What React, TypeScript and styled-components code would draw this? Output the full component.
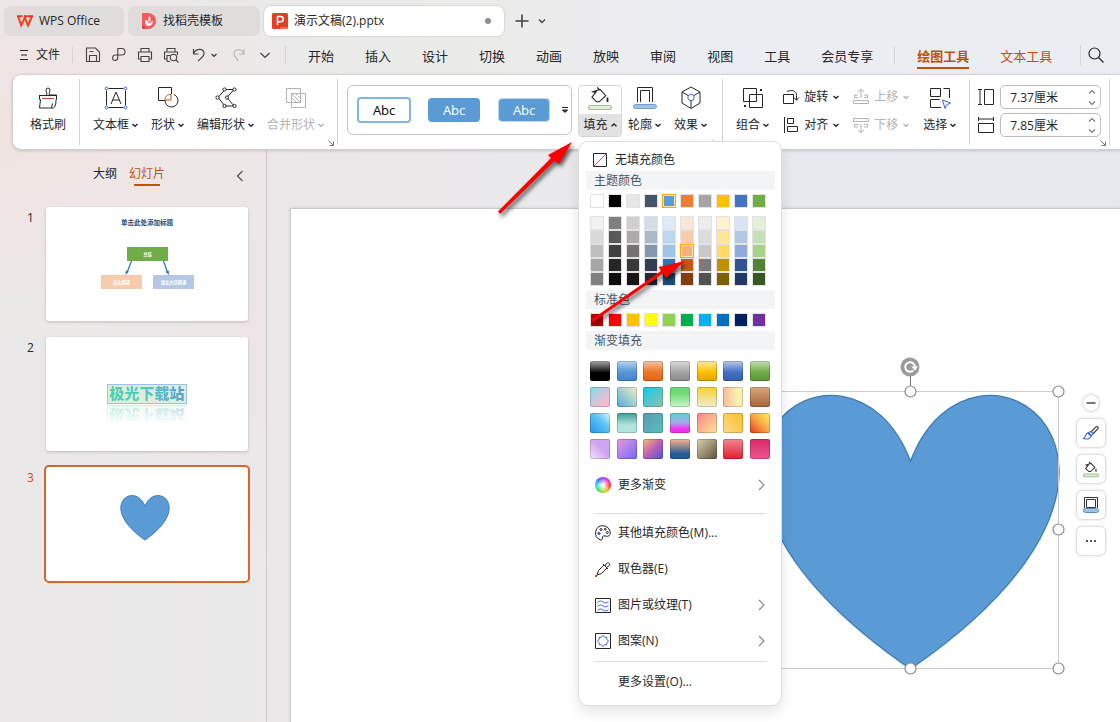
import React from 'react';
import styled, { createGlobalStyle, css } from 'styled-components';

const ink = '#262626';
const accent = '#c0510f';
const muted = '#b3b3b3';
const rule = '#d4d4d6';
const blue = '#5b9bd5';

const GlobalStyle = createGlobalStyle`
  *, *::before, *::after { box-sizing: border-box; }
  body {
    margin: 0;
    color: ${ink};
    font-family: "Open Sans", "Noto Sans CJK SC", sans-serif;
    font-size: 12px;
    line-height: 16px;
  }
  button, input {
    font: inherit;
    color: inherit;
    border: 0;
    background: none;
    padding: 0;
    margin: 0;
  }
`;

/* ---------- shared parts ---------- */

const Icon = styled.svg<{ $size?: number; $weight?: number }>`
  display: block;
  flex: none;
  width: ${(p) => p.$size ?? 16}px;
  height: ${(p) => p.$size ?? 16}px;
  fill: none;
  stroke: currentColor;
  stroke-width: ${(p) => p.$weight ?? 1};
  overflow: visible;
`;

const Caret = ({ up }: { up?: boolean }) => (
  <Icon $size={6} $weight={1.4} viewBox="0 0 6 6">
    <path d={up ? 'M.5 4.2 3 1.9l2.5 2.3' : 'M.5 1.9 3 4.2l2.5-2.3'} />
  </Icon>
);

const Divider = styled.span<{ $h: number }>`
  flex: none;
  width: 1px;
  height: ${(p) => p.$h}px;
  background: ${rule};
`;

const Window = styled.div`
  position: relative;
  min-height: 100vh;
  display: flex;
  flex-direction: column;
  overflow: hidden;
  background:
    radial-gradient(ellipse 280px 220px at 20px 130px, rgba(242, 226, 224, 0.8), rgba(242, 226, 224, 0)),
    radial-gradient(ellipse 200px 240px at 280px 330px, rgba(237, 227, 229, 0.9), rgba(237, 227, 229, 0)),
    linear-gradient(90deg, #eae8e8 0%, #ebebea 45%, #ecedf2 62%, #ecedf2 100%);
`;

/* ---------- title bar ---------- */

const TitleBar = styled.header`
  display: flex;
  align-items: center;
  gap: 4px;
  padding: 6px 4px 0;
`;

const DocTab = styled.button<{ $width: number; $active?: boolean; $pad: number }>`
  display: flex;
  align-items: center;
  gap: 6px;
  width: ${(p) => p.$width}px;
  height: 30px;
  padding: 0 ${(p) => p.$pad}px;
  border-radius: 7px;
  background: ${(p) => (p.$active ? '#fff' : '#dfdcdb')};
  box-shadow: ${(p) => (p.$active ? '0 0 2px rgba(0,0,0,.25)' : 'none')};
  text-align: left;
  white-space: nowrap;
`;

const UnsavedDot = styled.span`
  width: 6px;
  height: 6px;
  margin-left: auto;
  margin-right: 5px;
  border-radius: 50%;
  background: #8e8e8e;
`;

const PlainButton = styled.button`
  display: flex;
  align-items: center;
  justify-content: center;
`;

const NewTab = styled.div`
  display: flex;
  align-items: center;
  gap: 9px;
  margin-left: 7px;
  color: #444;
`;

/* ---------- menu bar ---------- */

const MenuBar = styled.nav`
  display: flex;
  align-items: center;
  height: 38px;
  padding: 0 16px 0 19px;
  white-space: nowrap;
`;

const FileMenu = styled.button`
  display: flex;
  align-items: center;
  gap: 7px;
  margin-right: 12px;
`;

const QuickAccess = styled.div`
  display: flex;
  align-items: center;
  gap: 10px;
  padding: 0 12px;
  color: #444;
`;

const UndoGroup = styled.div`
  display: flex;
  align-items: center;
  gap: 4px;
  padding: 0 4px 0 2px;
`;

const Faded = styled(PlainButton)`
  color: ${muted};
`;

const MenuTabs = styled.div`
  display: flex;
  align-items: center;
  gap: 31px;
  padding: 0 21px 0 22px;
  font-size: 13px;
`;

const MenuTab = styled.button<{ $tone?: 'active' | 'context' }>`
  height: 28px;
  line-height: 20px;
  border-bottom: 2px solid transparent;
  padding-top: 4px;
  ${(p) => p.$tone && css`color: ${accent};`}
  ${(p) =>
    p.$tone === 'active' &&
    css`
      font-weight: 700;
      border-bottom-color: ${accent};
    `}
`;

const Spring = styled.span`
  flex: 1;
`;

/* ---------- ribbon ---------- */

const Ribbon = styled.section`
  position: relative;
  z-index: 2;
  display: flex;
  align-items: flex-start;
  height: 76px;
  margin-left: 12px;
  padding-top: 4px;
  border: 1px solid #d2d0d0;
  border-right: 0;
  border-radius: 9px 0 0 9px;
  background: #fff;
  box-shadow: 0 1px 3px rgba(0, 0, 0, 0.16);
  white-space: nowrap;
`;

const Group = styled.div<{ $gap?: number; $l?: number; $r?: number }>`
  position: relative;
  display: flex;
  flex: none;
  align-items: flex-start;
  gap: ${(p) => p.$gap ?? 13}px;
  height: 66px;
  padding: 7px ${(p) => p.$r ?? 13}px 0 ${(p) => p.$l ?? 13}px;
  border-right: 1px solid ${rule};
`;

const BigButton = styled.button<{ $off?: boolean }>`
  display: flex;
  flex-direction: column;
  align-items: center;
  gap: 7px;
  color: ${(p) => (p.$off ? muted : ink)};
`;

const Caption = styled.span`
  display: flex;
  align-items: center;
  gap: 3px;
`;

const Launcher = styled.button`
  position: absolute;
  right: 3px;
  bottom: -1px;
  color: #777;
`;

const Gallery = styled.div`
  display: flex;
  align-items: center;
  width: 225px;
  height: 50px;
  margin: 6px 6px 0 9px;
  padding: 0 1px 0 9px;
  border: 1px solid #c4c4c4;
  border-radius: 6px;
`;

const StyleSample = styled.button<{ $kind: 'outline' | 'solid' | 'edged' }>`
  width: 52px;
  height: 24px;
  margin-right: 18px;
  border-radius: 4px;
  font-size: 13px;
  background: ${(p) => (p.$kind === 'outline' ? '#fff' : blue)};
  color: ${(p) => (p.$kind === 'outline' ? '#000' : '#fff')};
  ${(p) =>
    p.$kind === 'outline' &&
    css`
      width: 54px;
      height: 26px;
      margin-right: 17px;
      border: 2px solid #84b4e2;
    `}
  ${(p) =>
    p.$kind === 'edged' &&
    css`
      border: 1px solid #bcd6ef;
      margin-right: 11px;
    `}
`;

const FillControl = styled.div`
  position: relative;
  width: 44px;
  margin-top: 6px;
`;

const FillButton = styled.button`
  display: flex;
  flex-direction: column;
  align-items: center;
  width: 44px;
  height: 52px;
  overflow: hidden;
  border: 1px solid #d8d8d8;
  border-radius: 4px;
`;

const FillLabel = styled.span`
  display: flex;
  align-items: center;
  justify-content: center;
  gap: 3px;
  flex: 1;
  width: 100%;
  margin-top: 4px;
  background: #e2e2e2;
`;

const Stack = styled.div`
  display: flex;
  flex-direction: column;
  gap: 12px;
  padding-top: 3px;
`;

const SmallButton = styled.button<{ $off?: boolean }>`
  display: flex;
  align-items: center;
  gap: 5px;
  height: 16px;
  color: ${(p) => (p.$off ? muted : ink)};
`;

const SizeFields = styled.div`
  display: flex;
  flex-direction: column;
  gap: 4px;
  margin-top: -1px;
`;

const SizeLabel = styled.label`
  display: flex;
  align-items: center;
  gap: 6px;
`;

const SizeBox = styled.span`
  display: flex;
  align-items: center;
  width: 101px;
  height: 24px;
  padding: 0 5px 0 9px;
  border: 1px solid #bdbdbd;
  border-radius: 5px;
`;

const SizeInput = styled.input`
  flex: 1;
  min-width: 0;
  height: 20px;
  outline: 0;
`;

const Spinner = styled.span`
  display: flex;
  flex-direction: column;
  gap: 5px;
  color: #777;
`;

/* ---------- fill dropdown ---------- */

const Popup = styled.div`
  position: absolute;
  z-index: 5;
  top: 56px;
  left: 0;
  width: 204px;
  padding: 7px 6px 5px 7px;
  border: 1px solid #dedede;
  border-radius: 10px;
  background: #fff;
  box-shadow: 0 6px 14px rgba(0, 0, 0, 0.1);
`;

const NoFill = styled.button`
  display: flex;
  align-items: center;
  gap: 8px;
  height: 22px;
  padding-left: 7px;
`;

const Heading = styled.h3`
  height: 19px;
  margin: 0;
  padding-left: 8px;
  font-size: 12px;
  font-weight: 400;
  line-height: 20px;
  color: #44546a;
  background: #f3f4f6;
`;

const SwatchRow = styled.div`
  display: flex;
  gap: 4px;
  margin: 4px;
`;

const TintGrid = styled.div`
  display: flex;
  gap: 4px;
  margin: 8px 4px 4px;
`;

const TintColumn = styled.div`
  display: flex;
  flex-direction: column;
`;

const Swatch = styled.button<{ $c: string; $on?: boolean }>`
  width: 14px;
  height: 14px;
  border: 1px solid ${(p) => (p.$on ? '#ffa800' : '#e2e2e6')};
  background: ${(p) => p.$c};
  ${(p) => p.$on && css`box-shadow: inset 0 0 0 1px #ffe3a6;`}
`;

const GradientGrid = styled.div`
  display: grid;
  grid-template-columns: repeat(7, 20px);
  justify-content: space-between;
  row-gap: 6px;
  width: 180px;
  margin: 11px 4px 8px;
`;

const GradientSwatch = styled.button<{ $g: string }>`
  height: 20px;
  border: 1px solid rgba(0, 0, 0, 0.18);
  border-radius: 2px;
  background: ${(p) => p.$g};
  background-origin: border-box;
`;

const MenuRow = styled.button`
  display: flex;
  align-items: center;
  gap: 7px;
  width: 100%;
  height: 36px;
  padding: 0 8px 0 9px;
  text-align: left;
`;

const Trail = styled.span`
  margin-left: auto;
  color: #888;
`;

const IconSlot = styled.span`
  width: 16px;
  height: 16px;
`;

const ColorWheel = styled.span`
  width: 16px;
  height: 16px;
  border-radius: 50%;
  background:
    radial-gradient(circle, #fff 5%, rgba(255, 255, 255, 0) 65%),
    conic-gradient(#a040ff, #ff2090 60deg, #ff3020 100deg, #ffb020 140deg, #a0e030 180deg, #30e060 220deg, #20e0e0 270deg, #3060ff 320deg, #a040ff);
`;

const Line = styled.hr`
  height: 1px;
  margin: 10px 9px 1px;
  border: 0;
  background: #dcdce0;
  & ~ & { margin: 2px 9px; }
`;

/* ---------- slide panel ---------- */

const Body = styled.main`
  flex: 1;
  display: grid;
  grid-template-columns: 267px minmax(0, 1fr);
`;

const Panel = styled.aside`
  border-right: 1px solid #cac8c9;
`;

const PanelTabs = styled.div`
  display: flex;
  align-items: flex-start;
  gap: 12px;
  padding: 16px 20px 0 93px;
`;

const PanelTab = styled.button<{ $active?: boolean }>`
  display: flex;
  flex-direction: column;
  align-items: center;
  gap: 2px;
  color: ${(p) => (p.$active ? accent : ink)};
  &::after {
    content: '';
    width: ${(p) => (p.$active ? 26 : 0)}px;
    height: 2px;
    background: ${accent};
  }
`;

const Collapse = styled(PlainButton)`
  height: 20px;
  margin-left: auto;
  color: #555;
`;

const Slides = styled.ol`
  display: flex;
  flex-direction: column;
  gap: 16px;
  margin: 0;
  padding: 21px 18px 0 27px;
  list-style: none;
`;

const SlideItem = styled.li<{ $active?: boolean }>`
  display: flex;
  align-items: flex-start;
  color: ${(p) => (p.$active ? accent : ink)};
`;

const SlideNumber = styled.span`
  width: 19px;
  padding-top: 3px;
`;

const Thumb = styled.button<{ $active?: boolean }>`
  display: flex;
  align-items: center;
  justify-content: center;
  flex: 1;
  height: 114px;
  border-radius: 3px;
  background: #fff;
  box-shadow: ${(p) => (p.$active ? '0 0 0 2px #d4682a' : '0 1px 3px rgba(0,0,0,.2)')};
`;

const ThumbArt = styled.svg`
  display: block;
  width: 100%;
  height: 100%;
`;

const WordArt = styled.span`
  border: 1px solid #9cc0e6;
  background: #dfeedb;
  height: 20px;
  padding: 0 1px;
  font-size: 15px;
  line-height: 17px;
  font-weight: 900;
  -webkit-box-reflect: below 1px linear-gradient(transparent 5%, rgba(0, 0, 0, 0.4));
`;

const WordArtText = styled.span`
  color: transparent;
  background: linear-gradient(90deg, #4cd0ae, #50c8c8 50%, #5b9bd5);
  -webkit-background-clip: text;
  background-clip: text;
`;

/* ---------- canvas ---------- */

const Stage = styled.section`
  display: flex;
  padding: 58px 0 0 23px;
  overflow: hidden;
  background: linear-gradient(90deg, #ebe6e8, #e9e9eb 40%, #e6e8ee 75%);
`;

const Sheet = styled.div`
  position: relative;
  flex: 1;
  border: 1px solid #cac8c9;
  border-width: 1px 0 0 1px;
  background: #fff;
  box-shadow: 0 0 3px rgba(0, 0, 0, 0.12);
`;

const HeartShape = styled.svg`
  position: absolute;
  top: 141px;
  left: 459px;
  width: 330px;
  height: 340px;
`;

const MiniBar = styled.div`
  position: absolute;
  top: 186px;
  left: 786px;
  display: flex;
  flex-direction: column;
  align-items: center;
  gap: 8px;
`;

const MiniButton = styled.button<{ $round?: boolean }>`
  display: flex;
  align-items: center;
  justify-content: center;
  width: ${(p) => (p.$round ? 16 : 28)}px;
  height: ${(p) => (p.$round ? 16 : 28)}px;
  border-radius: ${(p) => (p.$round ? 8 : 5)}px;
  background: #fff;
  box-shadow: 0 0 3px rgba(0, 0, 0, 0.35);
  color: #333;
`;

const Pointers = styled.svg`
  position: absolute;
  z-index: 9;
  top: 130px;
  left: 480px;
  width: 220px;
  height: 210px;
  pointer-events: none;
  filter: drop-shadow(2px 3px 2px rgba(0, 0, 0, 0.65));
`;

/* ---------- drawings ---------- */

const BucketArt = ({ size = 24 }: { size?: number }) => (
  <Icon $size={size} $weight={size < 20 ? 1.6 : 1.1} viewBox="0 0 24 24">
    <path d="M9.2 1.5 12 4.2M5.5 5.6 12 3.4l5.8 6.2-6.6 6.2H8.6L3.9 11.2l4.2-5.4M3.6 5.6c2 .8 4.2.8 5.2.2" />
    <path d="M19.5 11.5V16" strokeWidth="1.8" />
    <rect x=".6" y="19.5" width="22.8" height="4" rx="2" fill="#dff0d6" stroke="#a3bd96" />
  </Icon>
);

const heartPath = (x: number, y: number, w: number, h: number) => {
  const c = x + w / 2;
  const q = y + h / 4;
  const t = y - h / 3;
  const near = (w * 10) / 48;
  const far = (w * 49) / 48;
  return `M${c} ${q}C${c + near} ${t} ${c + far} ${q} ${c} ${y + h}C${c - far} ${q} ${c - near} ${t} ${c} ${q}Z`;
};

const Chevron = () => (
  <Icon $size={12} $weight={1.2} viewBox="0 0 12 12"><path d="m4 1 5 5-5 5" /></Icon>
);

const LaunchArt = () => (
  <Icon $size={6} viewBox="0 0 6 6"><path d="m.5.5 5 5M5.5 1.500v4h-4" /></Icon>
);

/* ---------- data ---------- */

const themeColors = ['#ffffff', '#000000', '#e7e6e6', '#44546a', '#5b9bd5', '#ed7d31', '#a5a5a5', '#ffc000', '#4472c4', '#70ad47'];
const tints = [
  ['#f2f2f2', '#d9d9d9', '#bfbfbf', '#a6a6a6', '#7f7f7f'],
  ['#7f7f7f', '#595959', '#404040', '#262626', '#0d0d0d'],
  ['#d0cece', '#aeaaaa', '#757171', '#3a3838', '#161616'],
  ['#d6dce5', '#adb9ca', '#8497b0', '#333f50', '#222a35'],
  ['#deebf7', '#bdd7ee', '#9dc3e6', '#2e75b6', '#1f4e79'],
  ['#fbe5d6', '#f8cbad', '#f4b183', '#c55a11', '#843c0c'],
  ['#ededed', '#dbdbdb', '#c9c9c9', '#7b7b7b', '#525252'],
  ['#fff2cc', '#ffe699', '#ffd966', '#bf9000', '#7f6000'],
  ['#dae3f3', '#b4c7e7', '#8faadc', '#2f5597', '#203864'],
  ['#e2f0d9', '#c5e0b4', '#a9d18e', '#548235', '#385723'],
];
const standardColors = ['#c00000', '#ff0000', '#ffc000', '#ffff00', '#92d050', '#00b050', '#00b0f0', '#0070c0', '#002060', '#7030a0'];
const gradients = [
  'linear-gradient(#a8a8a8, #000 60%)',
  'linear-gradient(#b9d5f0, #5b9bd5 50%, #3f84cc)',
  'linear-gradient(#f9c6a4, #ed7d31 50%, #e0640f)',
  'linear-gradient(#dadada, #a5a5a5 55%, #8a8a8a)',
  'linear-gradient(#ffe9a8, #ffc000 55%, #dfa500)',
  'linear-gradient(#b9cbec, #4472c4 55%, #3560ac)',
  'linear-gradient(#c6e0b4, #70ad47 55%, #5c9438)',
  'linear-gradient(135deg, #7edcec, #f4bcd0 75%)',
  'linear-gradient(45deg, #52a8dc, #f2f2c2)',
  'linear-gradient(135deg, #08cfee, #98bda8)',
  'linear-gradient(#6fd878 30%, #c8f8c8)',
  'linear-gradient(#f8d030, #f0ecd0)',
  'linear-gradient(90deg, #fcb898, #f8f0b0 70%)',
  'linear-gradient(#dba67c, #a86438)',
  'linear-gradient(45deg, #2496ec, #60c4f4 60%, #e4fcfc)',
  'linear-gradient(#3c9c94, #b0e4dc 60%)',
  'linear-gradient(135deg, #5898b8, #5cc0bc)',
  'linear-gradient(#60d0d8, #a8a8e8 50%, #f430f0 80%)',
  'linear-gradient(135deg, #fc8484, #fce498)',
  'linear-gradient(45deg, #fcd880, #fcc030)',
  'linear-gradient(45deg, #e83820, #f8a848 50%, #fcf450)',
  'linear-gradient(45deg, #f4e8fc, #d0a4f0 55%)',
  'linear-gradient(135deg, #ec98dc, #7068fc)',
  'linear-gradient(135deg, #fcbc68, #bc60b8 50%, #4858d0)',
  'linear-gradient(#fcb488, #205c98 75%)',
  'linear-gradient(135deg, #d8d4b0, #605038)',
  'linear-gradient(#f08890, #e41c30)',
  'linear-gradient(#d82868, #ec5890)',
];

const menuTabs = ['开始', '插入', '设计', '切换', '动画', '放映', '审阅', '视图', '工具', '会员专享'];

/* ---------- sections ---------- */

const Titles = () => (
  <TitleBar>
    <DocTab $width={120} $pad={13}>
      <Icon $weight={2} viewBox="0 0 16 16">
        <path stroke="#f0282c" d="M0 3.200h5.500M7 3.200h3.500M11 3.200h5" />
        <path stroke="#f0401c" d="M1.200 3.500 4.200 12.300 7.800 4.500l3.200 7.800L14.800 3.500" />
      </Icon>
      WPS Office
    </DocTab>
    <DocTab $width={132} $pad={13}>
      <Icon viewBox="0 0 16 16">
        <path fill="#f25a5c" stroke="none" d="M1 0h6a8 8 0 0 1 0 16H3a2 2 0 0 1-2-2z" />
        <path fill="#d93a3e" stroke="none" d="M1 12l4 4H3a2 2 0 0 1-2-2z" />
        <path fill="#fff" stroke="none" d="M8.300 3c1.900 2 1.900 4.600 0 6.500-1.300-1.900-1.500-4.400 0-6.500zM4 7c2 .2 3.400 1.600 3.700 3.600 1.300-.3 2.800-1 3.800-3 .8 3.400-1.200 5.400-3.800 5.400S3.800 10.500 4 7z" />
      </Icon>
      找稻壳模板
    </DocTab>
    <DocTab $width={240} $pad={8} $active>
      <Icon $weight={1.6} viewBox="0 0 16 16">
        <rect width="16" height="16" rx="1.500" fill="#e03e26" stroke="none" />
        <path d="M8 14h8v1a1 1 0 0 1-1 1H8z" fill="#ff6a40" stroke="none" />
        <path d="M5.500 12V3.500h3.200a2.500 2.500 0 0 1 0 5.200H5.500" stroke="#fff" />
      </Icon>
      演示文稿(2).pptx
      <UnsavedDot />
    </DocTab>
    <NewTab>
      <PlainButton aria-label="新建标签">
        <Icon $size={14} $weight={1.6} viewBox="0 0 14 14"><path d="M7 .5v13M.5 7h13" /></Icon>
      </PlainButton>
      <PlainButton aria-label="标签列表">
        <Icon $size={8} $weight={1.4} viewBox="0 0 8 8"><path d="m1 2.500 3 3 3-3" /></Icon>
      </PlainButton>
    </NewTab>
  </TitleBar>
);

const Menu = () => (
  <MenuBar>
    <FileMenu>
      <Icon $size={10} viewBox="0 0 10 10"><path d="M1 .5h8M2 5h6M1 9.500h8" /></Icon>
      文件
    </FileMenu>
    <Divider $h={16} />
    <QuickAccess>
      <PlainButton aria-label="保存">
        <Icon $weight={1.1} viewBox="0 0 16 16"><path d="M1.500 1h9l4 4v9.500h-13zM4.500 14V8.500h7V14M4.500 4.500h4" /></Icon>
      </PlainButton>
      <PlainButton aria-label="导出">
        <Icon $weight={1.1} viewBox="0 0 16 16"><path d="M6.500 1.500H11c4 0 4 6.500 0 6.500H4.500C1 8 .5 13.500 4 13.500c2 0 2.800-1.200 2.800-3V1.500" /></Icon>
      </PlainButton>
      <PlainButton aria-label="打印">
        <Icon $weight={1.1} viewBox="0 0 16 16"><path d="M4 5V1.500h8V5M4 12H1.500V5h13v7H12M4 9.500h8v5H4z" /></Icon>
      </PlainButton>
      <PlainButton aria-label="打印预览">
        <Icon $weight={1.1} viewBox="0 0 16 16"><path d="M4 5V1.500h8V5M4 12H1.500V5h13v3M4 14.500V8.500h3M4 14.500h3" /><circle cx="10.500" cy="10.500" r="3.200" /><path d="m13 13 2.500 2.500" /></Icon>
      </PlainButton>
      <UndoGroup>
        <PlainButton aria-label="撤销">
          <Icon $weight={1.2} viewBox="0 0 16 16"><path d="M2.500 2v5h5M2.700 6.500C5 1 13 1 13 6.500c0 3-3 4.500-6 7.500" /></Icon>
        </PlainButton>
        <PlainButton aria-label="撤销列表"><Caret /></PlainButton>
      </UndoGroup>
      <Faded aria-label="恢复">
        <Icon $weight={1.1} viewBox="0 0 16 16"><path d="M13 2v5H8M12.800 6.500C11 1.500 3 1.500 3 6.500c0 3 3 4.500 4 7.500" /></Icon>
      </Faded>
      <PlainButton aria-label="更多">
        <Icon $weight={1.2} viewBox="0 0 16 16"><path d="m3.500 6 4.500 4.500L12.500 6" /></Icon>
      </PlainButton>
    </QuickAccess>
    <Divider $h={18} />
    <MenuTabs>
      {menuTabs.map((t) => <MenuTab key={t}>{t}</MenuTab>)}
    </MenuTabs>
    <Divider $h={18} />
    <MenuTabs>
      <MenuTab $tone="active">绘图工具</MenuTab>
      <MenuTab $tone="context">文本工具</MenuTab>
    </MenuTabs>
    <Spring />
    <Divider $h={20} />
    <Spring />
    <PlainButton aria-label="搜索">
      <Icon $weight={1.2} viewBox="0 0 16 16"><circle cx="6.500" cy="6.500" r="5.500" /><path d="m10.500 10.500 5 5" /></Icon>
    </PlainButton>
  </MenuBar>
);

const FillPopup = () => (
  <Popup role="menu">
    <NoFill>
      <Icon $size={14} viewBox="0 0 14 14"><path d="M.5.500h13v13H.500z" /><path stroke="#e0526a" d="M1 13 13 1" /></Icon>
      无填充颜色
    </NoFill>
    <Heading>主题颜色</Heading>
    <SwatchRow>
      {themeColors.map((c) => <Swatch key={c} $c={c} $on={c === blue} aria-label={c} />)}
    </SwatchRow>
    <TintGrid>
      {tints.map((col, i) => (
        <TintColumn key={i}>
          {col.map((c) => <Swatch key={c} $c={c} $on={c === '#f4b183'} aria-label={c} />)}
        </TintColumn>
      ))}
    </TintGrid>
    <Heading>标准色</Heading>
    <SwatchRow>
      {standardColors.map((c) => <Swatch key={c} $c={c} aria-label={c} />)}
    </SwatchRow>
    <Heading>渐变填充</Heading>
    <GradientGrid>
      {gradients.map((g) => <GradientSwatch key={g} $g={g} aria-label="渐变" />)}
    </GradientGrid>
    <MenuRow><ColorWheel />更多渐变<Trail><Chevron /></Trail></MenuRow>
    <Line />
    <MenuRow>
      <Icon viewBox="0 0 16 16">
        <path d="M8 .7a7.300 7.300 0 0 0-3 14c2.800 1 2.200-1.200 2.500-2.700.4-1.600 1.700-1.300 3.500-.8 2.300.6 4.300-.8 4.300-3.200A7.300 7.300 0 0 0 8 .700z" />
        <circle cx="4" cy="8.500" r="1.200" stroke="#3c64dc" fill="#3c64dc" />
        <circle cx="6" cy="4.500" r="1" /><circle cx="10.200" cy="4.200" r="1" /><circle cx="12.300" cy="7.500" r="1" />
      </Icon>
      其他填充颜色(M)...
    </MenuRow>
    <MenuRow>
      <Icon viewBox="0 0 16 16">
        <path d="M9 4 3.500 9.500 2 14l4.500-1.500L12 7M8 3l5 5M10 5l1.500-2.500C13 .5 16 3 14 4.800L11.500 6.500" />
        <path d="M0 15h2" stroke={accent} strokeWidth="2" />
      </Icon>
      取色器(E)
    </MenuRow>
    <MenuRow>
      <Icon viewBox="0 0 16 16">
        <path d="M.5 1.500h15v14H.500z" />
        <path stroke="#3c64dc" d="M2.500 5.500c2-2 3.500-2 5.500-.5s3.500 1 5.500-.5M2.500 9.500c2-2 3.500-2 5.500-.5s3.500 1 5.500-.5M2.500 13.500c2-2 3.500-2 5.500-.5s3.500 1 5.500-.5" />
      </Icon>
      图片或纹理(T)<Trail><Chevron /></Trail>
    </MenuRow>
    <MenuRow>
      <Icon viewBox="0 0 16 16">
        <path d="M.5.500h15v15H.500z" />
        <path stroke="#3c64dc" d="m8 2.500 1.800 1.700h2v2L13.500 8l-1.700 1.800v2h-2L8 13.500l-1.800-1.700h-2v-2L2.500 8l1.700-1.800v-2h2z" />
      </Icon>
      图案(N)<Trail><Chevron /></Trail>
    </MenuRow>
    <Line />
    <MenuRow><IconSlot />更多设置(O)...</MenuRow>
  </Popup>
);

const SizeField = ({ name, value, art }: { name: string; value: string; art: string }) => (
  <SizeLabel>
    <Icon viewBox="0 0 16 16"><path d={art} /></Icon>
    <SizeBox>
      <SizeInput defaultValue={value} aria-label={name} />
      <Spinner>
        <PlainButton aria-label={`增加${name}`}><Icon $size={6} $weight={1.2} viewBox="0 0 6 6"><path d="m0 4.500 3-3 3 3" /></Icon></PlainButton>
        <PlainButton aria-label={`减少${name}`}><Icon $size={6} $weight={1.2} viewBox="0 0 6 6"><path d="m0 1.500 3 3 3-3" /></Icon></PlainButton>
      </Spinner>
    </SizeBox>
  </SizeLabel>
);

const Tools = () => (
  <Ribbon>
    <Group $l={17}>
      <BigButton>
        <Icon $size={24} viewBox="0 0 24 24">
          <path d="M3.500 9.500h17M3.500 9v4.500h1l-1 8.500h14c2-1 2.500-4 2.500-8.500h.500V9h-7c-1-2 .5-3.500.5-5a2 2 0 0 0-4 0c0 1.500 1.500 3 .5 5M16.500 17.500 15.500 22" />
          <path stroke={accent} d="M6 12.500h12" />
        </Icon>
        <Caption>格式刷</Caption>
      </BigButton>
    </Group>
    <Group>
      <BigButton>
        <Icon $size={24} viewBox="0 0 24 24">
          <path d="M4.500 2.500h15M4.500 21.500h15M2.500 4.500v15M21.500 4.500v15M7 18l5-12 5 12M8.700 14h6.600" />
          <g stroke="#3c64dc" fill="#fff"><circle cx="2.500" cy="2.500" r="1.400" /><circle cx="21.500" cy="2.500" r="1.400" /><circle cx="2.500" cy="21.500" r="1.400" /><circle cx="21.500" cy="21.500" r="1.400" /></g>
        </Icon>
        <Caption>文本框<Caret /></Caption>
      </BigButton>
      <BigButton>
        <Icon $size={24} viewBox="0 0 24 24">
          <path d="M9 14.500H2.500v-13h13V8M18 8.500a6.500 6.500 0 1 1-9 6" />
          <path stroke={accent} d="M9 14c0-4 2.500-5.500 6-5.500V14z" />
        </Icon>
        <Caption>形状<Caret /></Caption>
      </BigButton>
      <BigButton>
        <Icon $size={24} viewBox="0 0 24 24">
          <path d="M20 3.500h-9l-7 8 7 8.500h9l-7-8.500z" />
          <g fill="#fff"><circle cx="20.500" cy="3.500" r="1.600" /><circle cx="10.500" cy="3.500" r="1.600" /><circle cx="3.500" cy="11.500" r="1.600" /><circle cx="13" cy="11.500" r="1.600" /><circle cx="10.500" cy="20" r="1.600" /><circle cx="20.500" cy="20" r="1.600" /></g>
        </Icon>
        <Caption>编辑形状<Caret /></Caption>
      </BigButton>
      <BigButton $off>
        <Icon $size={24} viewBox="0 0 24 24"><path d="M2.500 2.500h14v14h-14zM7.500 7.500h14v14h-14zM8 8l8.500 8.500M12 8l4.500 4.500M8 12l4.500 4.500" /></Icon>
        <Caption>合并形状<Caret /></Caption>
      </BigButton>
      <Launcher aria-label="形状选项"><LaunchArt /></Launcher>
    </Group>
    <Gallery>
      <StyleSample $kind="outline">Abc</StyleSample>
      <StyleSample $kind="solid">Abc</StyleSample>
      <StyleSample $kind="edged">Abc</StyleSample>
      <PlainButton aria-label="更多样式">
        <Icon $size={8} viewBox="0 0 8 8"><path d="M1 1.500h6M1.500 4 4 6.500 6.500 4z" fill="#333" /></Icon>
      </PlainButton>
    </Gallery>
    <FillControl>
      <FillButton aria-haspopup="menu" aria-expanded="true">
        <BucketArt />
        <FillLabel>填充<Caret up /></FillLabel>
      </FillButton>
      <FillPopup />
    </FillControl>
    <Group $l={6} $r={15}>
      <BigButton>
        <Icon $size={24} viewBox="0 0 24 24">
          <path d="M4.500 16V1.500h15V16M7.500 16V4.500h9V16" />
          <rect x=".5" y="18.500" width="23" height="4" rx="2" fill="#9dc3e6" stroke="#6f9cc6" />
        </Icon>
        <Caption>轮廓<Caret /></Caption>
      </BigButton>
      <BigButton>
        <Icon $size={24} viewBox="0 0 24 24">
          <path d="m12 1 9 5v11l-9 5.500L3 17V6zM3 6l6 3.500M21 6l-6 3.500M12 15v7" />
          <circle cx="12" cy="11.500" r="3.200" stroke="#3c64dc" />
        </Icon>
        <Caption>效果<Caret /></Caption>
      </BigButton>
      <Launcher aria-label="形状样式选项"><LaunchArt /></Launcher>
    </Group>
    <Group $gap={14}>
      <BigButton>
        <Icon $size={24} viewBox="0 0 24 24">
          <path d="M2.500 2.500h13v13h-13zM8.500 8.500h13v13h-13z" />
          <path d="M19 4h2M3 20h2" strokeWidth="2" />
        </Icon>
        <Caption>组合<Caret /></Caption>
      </BigButton>
      <Stack>
        <SmallButton>
          <Icon viewBox="0 0 16 16"><path d="M.5 5.500h10v9H.500zM4 2.500c5-2 9.500-1 9.500 4V11M11 8.500l2.500 2.800L16 8.500" /></Icon>
          旋转<Caret />
        </SmallButton>
        <SmallButton>
          <Icon viewBox="0 0 16 16"><path d="M1.500 0v16M4.500 1.500h6v5h-6zM4.500 9.500h10v5h-10z" /></Icon>
          对齐<Caret />
        </SmallButton>
      </Stack>
      <Stack>
        <SmallButton $off>
          <Icon viewBox="0 0 16 16"><path d="M5 8.500H1.500V6H5M11 6h3.500v2.500H11M.500 11.500h15v3H.500zM8 9V0M5 3.200 8 .500l3 2.700" /></Icon>
          上移<Caret />
        </SmallButton>
        <SmallButton $off>
          <Icon viewBox="0 0 16 16"><path d="M5 7.500H1.500V10H5M11 10h3.500V7.500H11M.500 1.500h15v3H.500zM8 7v9M5 12.800l3 2.700 3-2.700" /></Icon>
          下移<Caret />
        </SmallButton>
      </Stack>
      <BigButton>
        <Icon $size={24} viewBox="0 0 24 24">
          <path d="M2.500 2.500h10v8h-10zM15.500 2.500h6V12M2.500 14v7.500H13M2.500 13.500h9" />
          <path stroke="#3c64dc" fill="#fff" d="m14.500 14 8 3-3.800 1.800L17 22.500z" />
        </Icon>
        <Caption>选择<Caret /></Caption>
      </BigButton>
    </Group>
    <Group $l={8} $r={8}>
      <SizeFields>
        <SizeField name="高度" value="7.37厘米" art="M0 .5h4M2 .5v15M0 15.500h4M6.500.500h9v15h-9z" />
        <SizeField name="宽度" value="7.85厘米" art="M.500 0v4M.500 2h15M15.500 0v4M.500 6.500h15v9H.500z" />
      </SizeFields>
      <Launcher aria-label="大小选项"><LaunchArt /></Launcher>
    </Group>
  </Ribbon>
);

const SlidePanel = () => (
  <Panel>
    <PanelTabs>
      <PanelTab>大纲</PanelTab>
      <PanelTab $active>幻灯片</PanelTab>
      <Collapse aria-label="收起">
        <Icon $size={12} $weight={1.3} viewBox="0 0 12 12"><path d="M8.500 1 3.500 6l5 5" /></Icon>
      </Collapse>
    </PanelTabs>
    <Slides>
      <SlideItem>
        <SlideNumber>1</SlideNumber>
        <Thumb>
          <ThumbArt viewBox="0 0 808 456">
            <text x="404" y="72" fontSize="26" fontWeight="700" fill="#1f4e79" textAnchor="middle">单击此处添加标题</text>
            <path fill="#70ad47" d="M324 160h164v56H324z" />
            <path fill="#f8cbad" d="M220 272h164v56H220z" />
            <path fill="#b4c7e7" d="M428 272h164v56H428z" />
            <g fill="#fff" fontSize="17" fontWeight="700" textAnchor="middle">
              <text x="406" y="194">总结</text>
              <text x="302" y="306">语文阅读</text>
              <text x="510" y="306">语文古诗朗诵</text>
            </g>
            <path stroke="#2e75b6" strokeWidth="5" fill="none" d="m342 216-18 46M470 216l16 46" />
            <path fill="#2e75b6" d="m318 272 1-18 13 5zM492 272l-14-13 13-5z" />
          </ThumbArt>
        </Thumb>
      </SlideItem>
      <SlideItem>
        <SlideNumber>2</SlideNumber>
        <Thumb>
          <WordArt><WordArtText>极光下载站</WordArtText></WordArt>
        </Thumb>
      </SlideItem>
      <SlideItem $active>
        <SlideNumber>3</SlideNumber>
        <Thumb $active>
          <ThumbArt viewBox="0 0 202 114">
            <path d={heartPath(75, 28, 48, 45)} fill={blue} stroke="#3d7fbd" strokeWidth="1" />
          </ThumbArt>
        </Thumb>
      </SlideItem>
    </Slides>
  </Panel>
);

const handles = [[160, 41], [308, 41], [308, 179], [308, 318], [160, 318]];

const Canvas = () => (
  <Stage>
    <Sheet>
      <HeartShape viewBox="0 0 330 340">
        <path d={heartPath(13, 42, 295, 277)} fill={blue} stroke="#3a7ab8" strokeWidth="1.300" />
        <path d="M12.500 41.500h296v277h-296z" fill="none" stroke="#cbcbd2" />
        <path d="M160.500 26v10" stroke="#777" />
        <circle cx="160" cy="17" r="9.500" fill="#9b9b9b" />
        <path d="M164.800 17a4.800 4.800 0 1 0-1.600 3.600" fill="none" stroke="#fff" strokeWidth="2" />
        <path d="M161.300 16.500h6.700l-3 4.300z" fill="#fff" />
        <g fill="#fff" stroke="#8a8a8a" strokeWidth="1.200">
          {handles.map(([x, y]) => <circle key={`${x}-${y}`} cx={x + 0.5} cy={y + 0.5} r="5.500" />)}
        </g>
      </HeartShape>
      <MiniBar>
        <MiniButton $round aria-label="收起工具">
          <Icon $size={10} $weight={2} viewBox="0 0 10 10"><path stroke="#777" d="M.5 5h9" /></Icon>
        </MiniButton>
        <MiniButton aria-label="形状样式">
          <Icon $weight={1.1} viewBox="0 0 16 16">
            <path d="m8 7 5-5c1-1.200 3 .5 2 1.700L10 9" />
            <path stroke="#3c64dc" d="M4.500 8C2 9 3 12 .600 13.500c3 1 7 .8 7.500-2.500zM4.500 8 8 6.500 10 8.500 8.100 11M4.500 8c1.500 0 3 1 3.600 3" />
          </Icon>
        </MiniButton>
        <MiniButton aria-label="形状填充"><BucketArt size={16} /></MiniButton>
        <MiniButton aria-label="形状轮廓">
          <Icon viewBox="0 0 16 16">
            <path d="M1.500 11V.500h13V11M3.500 10.500v-8h9v8z" />
            <rect x=".5" y="11.500" width="15" height="4" rx="2" fill="#9dc3e6" stroke="#5f8fbc" />
          </Icon>
        </MiniButton>
        <MiniButton aria-label="更多操作">
          <Icon $weight={2} viewBox="0 0 16 16"><path stroke="#555" d="M3 8h2M7 8h2M11 8h2" /></Icon>
        </MiniButton>
      </MiniBar>
    </Sheet>
  </Stage>
);

export default function App() {
  return (
    <>
      <GlobalStyle />
      <Window>
        <Titles />
        <Menu />
        <Tools />
        <Body>
          <SlidePanel />
          <Canvas />
        </Body>
        <Pointers viewBox="0 0 220 210">
          <path fill="#f00" d="M92 12 79 34l-4-3.500L20 84l-2-2.500L71 28l-3-3zM205 131l-19 17-3-4.500L113 192l-1.500-2.500L181 141l-2.500-4z" />
        </Pointers>
      </Window>
    </>
  );
}
